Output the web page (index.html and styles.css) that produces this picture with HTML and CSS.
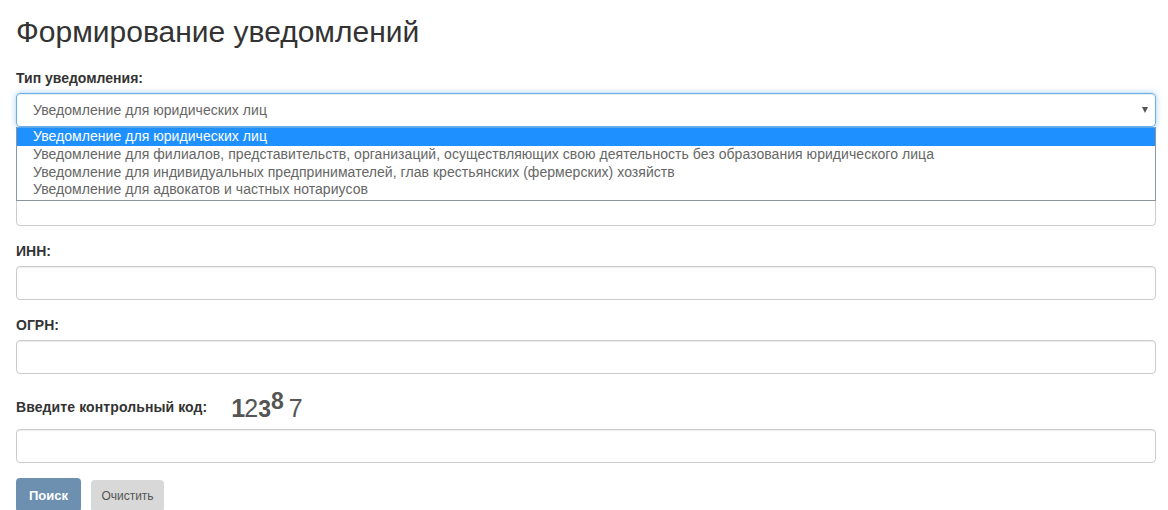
FILE: index.html
```html
<!DOCTYPE html>
<html lang="ru">
<head>
    <meta charset="UTF-8">
    <title>Формирование уведомлений</title>
    <link rel="stylesheet" href="styles.css">
</head>
<body>

<div class="container">
    <h1 class="title">Формирование уведомлений</h1>

    <!-- Тип уведомления -->
    <div class="group">
        <label class="field-label">Тип уведомления:</label>
        <div class="select-box">
            <div class="select-value">Уведомление для юридических лиц</div>
            <span class="select-arrow"></span>
            <ul class="select-list">
                <li class="selected">Уведомление для юридических лиц</li>
                <li>Уведомление для филиалов, представительств, организаций, осуществляющих свою деятельность без образования юридического лица</li>
                <li>Уведомление для индивидуальных предпринимателей, глав крестьянских (фермерских) хозяйств</li>
                <li>Уведомление для адвокатов и частных нотариусов</li>
            </ul>
        </div>
    </div>

    <!-- Закрыто списком -->
    <div class="group group-covered">
        <input type="text" class="field">
    </div>

    <div class="group">
        <label class="field-label">ИНН:</label>
        <input type="text" class="field">
    </div>

    <div class="group">
        <label class="field-label">ОГРН:</label>
        <input type="text" class="field">
    </div>

    <!-- Контрольный код -->
    <div class="group">
        <div class="captcha-row">
            <label class="field-label">Введите контрольный код:</label>
            <div class="captcha">
                <span class="d1">1</span><span class="d2">2</span><span class="d3">3</span><span class="d4">8</span><span class="d5">7</span>
            </div>
        </div>
        <input type="text" class="field">
    </div>

    <div class="buttons">
        <button class="btn btn-search">Поиск</button>
        <button class="btn btn-clear">Очистить</button>
    </div>
</div>

</body>
</html>
```

FILE: styles.css
```css
html, body {
    height: 510px;
    overflow: hidden;
}
body {
    margin: 0;
    background-color: #fff;
    color: #333;
    font-family: "Liberation Sans", Arial, sans-serif;
    font-size: 14px;
}
.container {
    padding: 0 12px 0 16px;
}
.title {
    margin: 0 0 18px;
    padding-top: 14px;
    font-size: 30px;
    line-height: 36px;
    font-weight: 400;
    color: #333;
}
.group {
    margin-bottom: 15px;
}
.group-covered {
    padding-top: 50px;
}
.field-label {
    display: block;
    margin-bottom: 5px;
    font-size: 14px;
    line-height: 20px;
    font-weight: 700;
}
.field {
    display: block;
    box-sizing: border-box;
    width: 100%;
    height: 34px;
    padding: 6px 12px;
    border: 1px solid #ccc;
    border-radius: 4px;
    background-color: #fff;
    box-shadow: inset 0 1px 1px rgba(0, 0, 0, 0.075);
}
.select-box {
    position: relative;
}
.select-value {
    box-sizing: border-box;
    height: 34px;
    padding: 6px 16px;
    border: 1px solid #66afe9;
    border-radius: 4px;
    font-size: 14px;
    line-height: 20px;
    letter-spacing: 0.05px;
    color: #666;
    box-shadow: inset 0 1px 1px rgba(0, 0, 0, 0.075), 0 0 6px rgba(102, 175, 233, 0.6);
}
.select-arrow {
    position: absolute;
    top: 14px;
    right: 8px;
    border-left: 3px solid transparent;
    border-right: 3px solid transparent;
    border-top: 6px solid #555;
}
.select-list {
    position: absolute;
    top: 34px;
    left: 0;
    right: 0;
    z-index: 2;
    box-sizing: border-box;
    height: 74px;
    margin: 0;
    padding: 0;
    list-style: none;
    background-color: #fff;
    border: 1px solid #8c969e;
    border-top: 0;
    font-size: 14px;
    letter-spacing: 0.05px;
    color: #666;
}
.select-list li {
    height: 17.5px;
    padding-left: 16px;
    line-height: 17px;
}
.select-list .selected {
    height: 19px;
    background-color: #1e90ff;
    color: #fff;
    border-top: 1px solid #5ea6ec;
    box-sizing: border-box;
}
.captcha-row {
    display: flex;
    align-items: flex-end;
    height: 35px;
    margin-bottom: 5px;
}
.captcha-row .field-label {
    margin-bottom: 7px;
    letter-spacing: 0.1px;
}
.captcha {
    display: flex;
    align-items: baseline;
    margin-left: 24px;
    color: #555;
    font-size: 25px;
    line-height: 30px;
}
.d1 {
    font-weight: 700;
    font-size: 25px;
}
.d2 {
    font-size: 25px;
    font-weight: 400;
    margin-left: -1px;
}
.d3 {
    font-weight: 700;
    font-size: 23px;
}
.d4 {
    position: relative;
    top: -8px;
    font-weight: 700;
    font-size: 23px;
}
.d5 {
    font-size: 25px;
    margin-left: 5px;
}
.buttons {
    display: flex;
    align-items: flex-end;
    gap: 10px;
    height: 34px;
}
.btn {
    box-sizing: border-box;
    border: 0;
    border-radius: 4px;
    font-family: "Liberation Sans", Arial, sans-serif;
}
.btn-search {
    width: 65px;
    height: 34px;
    background-color: #6d90b1;
    color: #fff;
    font-size: 13px;
    font-weight: 700;
}
.btn-clear {
    width: 73px;
    height: 32px;
    background-color: #d8d8d8;
    color: #555;
    font-size: 12px;
}
```
